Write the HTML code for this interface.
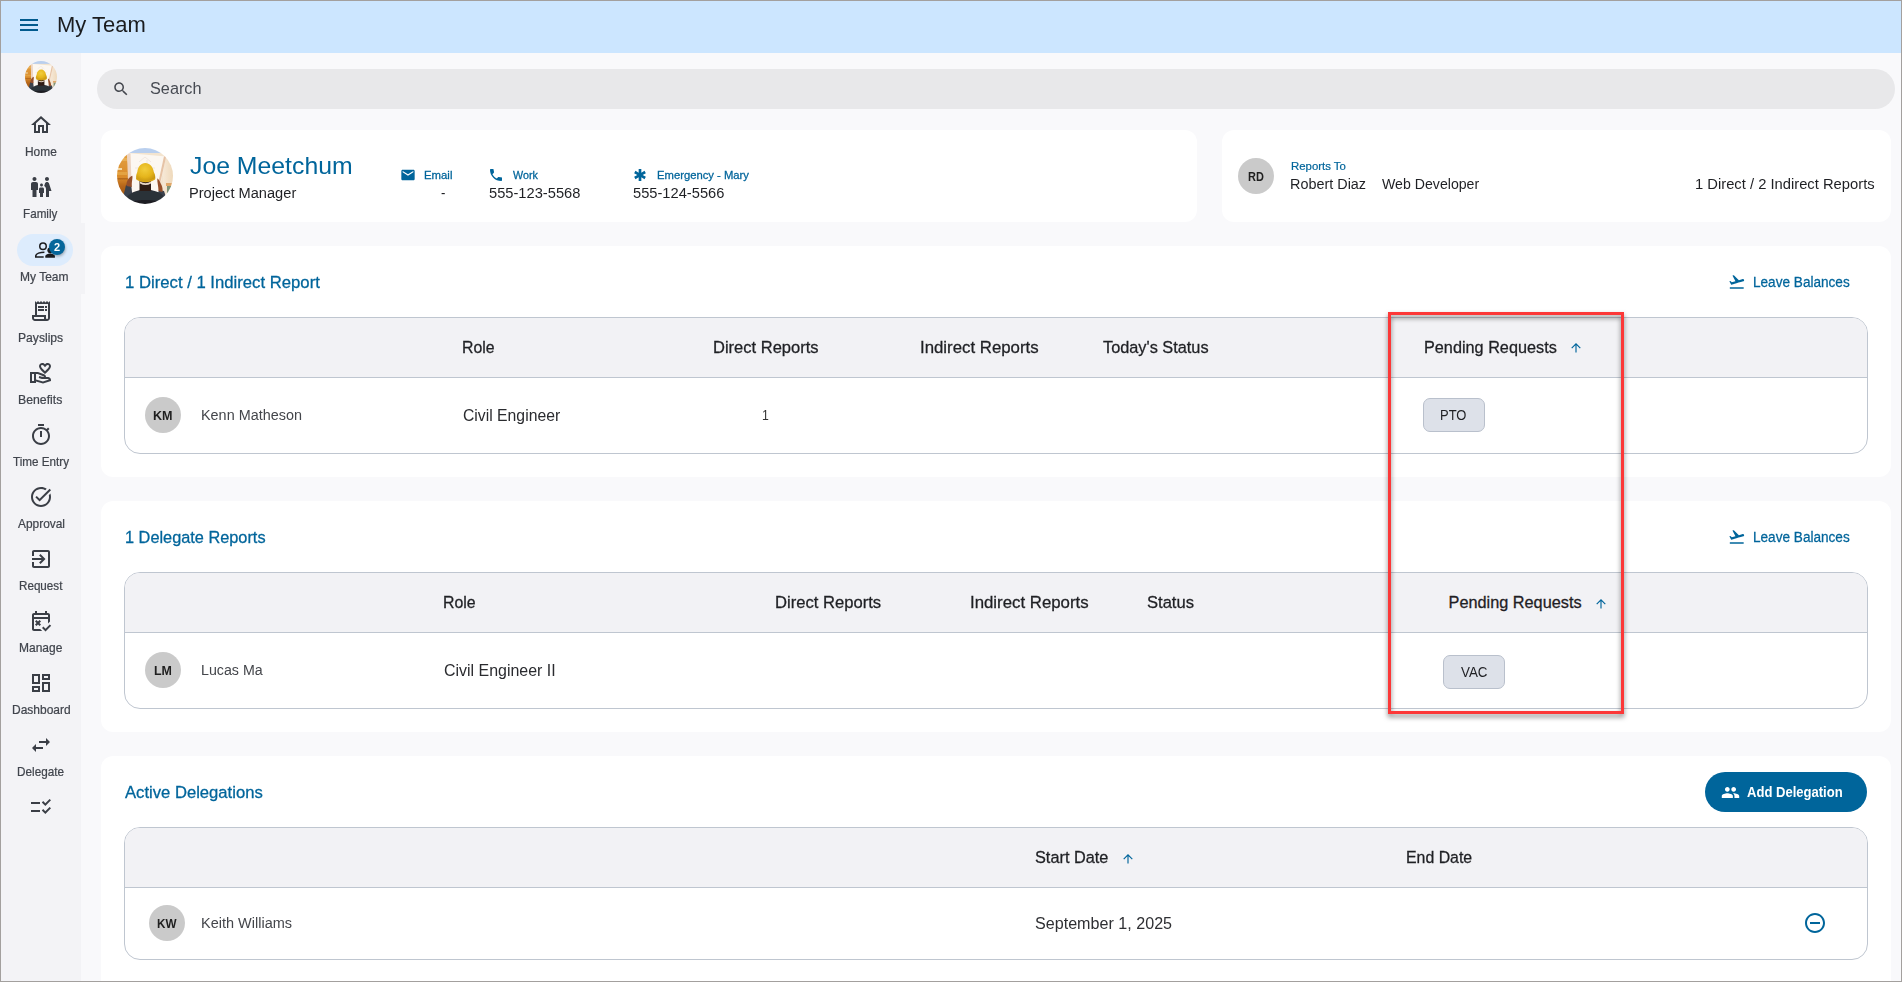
<!DOCTYPE html>
<html><head><meta charset="utf-8"><title>My Team</title>
<style>
html,body{margin:0;padding:0;}
body{width:1902px;height:982px;overflow:hidden;position:relative;background:#f9f9fb;font-family:"Liberation Sans",sans-serif;}
.b{position:absolute;}
.ic{position:absolute;display:block;overflow:visible;}
.t{position:absolute;white-space:nowrap;transform-origin:0 50%;display:block;}
#frame{position:absolute;left:0;top:0;width:1902px;height:982px;box-sizing:border-box;border:1px solid #a3a09e;z-index:50;pointer-events:none;}
</style></head><body>
<div class="b" style="left:1px;top:1px;width:1900px;height:52px;background:#cce6ff;"></div>
<div class="b" style="left:1px;top:53px;width:80px;height:928px;background:#f3f3f6;"></div>
<div class="b" style="left:81px;top:223px;width:4px;height:71px;background:#f3f3f6;"></div>
<div class="b" style="left:81px;top:53px;width:1820px;height:928px;background:#f9f9fb;z-index:-1;"></div>
<div class="b" style="left:20px;top:19px;width:18px;height:2px;background:#005a8e;"></div>
<div class="b" style="left:20px;top:24px;width:18px;height:2px;background:#005a8e;"></div>
<div class="b" style="left:20px;top:29px;width:18px;height:2px;background:#005a8e;"></div>
<div class="b" style="left:97px;top:69px;width:1798px;height:40px;background:#e8e8ea;border-radius:20px;"></div>
<svg class="ic" style="left:111.85px;top:79.75px;width:18px;height:18px;" viewBox="0 0 24 24"><path fill="#44474e" d="M15.500 14h-.79l-.28-.27C15.410 12.590 16 11.110 16 9.500 16 5.910 13.090 3 9.500 3S3 5.910 3 9.500 5.910 16 9.500 16c1.610 0 3.090-.59 4.230-1.570l.27.28v.79l5 4.990L20.490 19l-4.990-5zm-6 0C7.010 14 5 11.990 5 9.500S7.010 5 9.500 5 14 7.010 14 9.500 11.990 14 9.500 14z"/></svg>
<svg class="ic" style="left:25.0px;top:61.0px;width:32px;height:32px" viewBox="0 0 56 56"><defs>
<clipPath id="avc1"><circle cx="28" cy="28" r="28"/></clipPath>
<linearGradient id="avw1" x1="0" y1="0" x2="0" y2="1"><stop offset="0" stop-color="#e3a041"/><stop offset=".45" stop-color="#d98a2a"/><stop offset=".62" stop-color="#b5651a"/><stop offset="1" stop-color="#8a4a14"/></linearGradient>
<linearGradient id="avr1" x1="0" y1="0" x2="1" y2="0"><stop offset="0" stop-color="#f6e8d6"/><stop offset="1" stop-color="#ecd3b0"/></linearGradient>
<radialGradient id="avh1" cx=".45" cy=".35" r=".7"><stop offset="0" stop-color="#f2cd3c"/><stop offset=".6" stop-color="#e5b51c"/><stop offset="1" stop-color="#c4920e"/></radialGradient>
<filter id="avb1" x="-10%" y="-10%" width="120%" height="120%"><feGaussianBlur stdDeviation=".55"/></filter>
</defs>
<g clip-path="url(#avc1)"><g filter="url(#avb1)">
<rect x="-2" y="-2" width="60" height="60" fill="#f3e4cf"/>
<rect x="12" y="-2" width="34" height="7" fill="#b9cfee"/>
<rect x="-2" y="6" width="13" height="52" fill="url(#avw1)"/>
<rect x="1" y="20" width="4" height="2" fill="#f2d9a8"/><rect x="2" y="10" width="8" height="3" fill="#ecb860" opacity=".7"/><rect x="0" y="24" width="10" height="3" fill="#e9b050" opacity=".6"/><rect x="0" y="30" width="11" height="1.500" fill="#a85c14" opacity=".7"/>
<rect x="46" y="8" width="14" height="50" fill="url(#avr1)"/>
<rect x="49" y="35" width="7" height="3" fill="#e0a86a"/>
<rect x="50" y="38" width="4" height="9" fill="#7f9478"/>
<path d="M10 5 L49 8.500 L41 48 L14 48 Z" fill="#fcf7f1"/>
<path d="M10 5 L13.500 5.500 L15 48 L11.500 48 Z" fill="#ecd4c2"/>
<path d="M47 8.300 L49.200 8.600 L43 36 L41.200 35 Z" fill="#e6c3a6"/>
<path d="M22 14l6-5 6 5M18 20h20M30 12v14" stroke="#e6d6cc" stroke-width=".5" fill="none"/>
<path d="M9 37 L14 36 L15.500 48 L40 48 L42 42 L47 43 L52 58 L4 58 Z" fill="#3a424e"/>
<path d="M6 58 C8 46 17 43.500 23 42 L34 42 C41 43.500 49 46 51 58 Z" fill="#2c3038"/>
<path d="M8 58 C14 50 42 50 50 58 Z" fill="#1d1e22"/><path d="M22.500 32 h11.500 v11 h-11.500 Z" fill="#2e1c14"/>
<path d="M23 33.500 q5.500 3.500 11 0 v2 q-5.500 3.200 -11 0 Z" fill="#e8d6c8"/>
<path d="M19.200 30.800 C18.800 27 19.800 25.500 20.300 24 C21 18.500 24 15 28.300 15 C32.600 15 36 18.500 36.800 24 C37.500 25.500 38.600 27 38.200 30.800 C34 34 23 34 19.200 30.800 Z" fill="url(#avh1)"/>
<path d="M19 29.500 C22 33.500 35 33.500 38.300 29.500 L38 31.600 C34 35 23 35 19.300 31.600 Z" fill="#d9a516"/>
<path d="M9.500 38 C9 33 12 29 15.300 27.700 C16 30 14.500 33 14.800 39 Z" fill="#96502a"/>
<path d="M40.300 30.500 C42 31 43.500 35 44.500 37 C45.500 39 45.800 42 45.500 44 L41.500 43 C41.500 38 40 34 40.300 30.500 Z" fill="#96502a"/>
</g></g>
</svg>
<div class="b" style="left:17px;top:234px;width:56px;height:32px;background:#ddecfd;border-radius:16px;"></div>
<svg class="ic" style="left:29.00px;top:113.00px;width:24px;height:24px;" viewBox="0 0 24 24"><path fill="#3a3e46" d="M12 5.69l5 4.5V18h-2v-6H9v6H7v-7.81l5-4.5M12 3L2 12h3v8h6v-6h2v6h6v-8h3L12 3z"/></svg>
<svg class="ic" style="left:29.00px;top:175.00px;width:24px;height:24px;" viewBox="0 0 24 24"><path fill="#3a3e46" d="M16 4c0-1.11.89-2 2-2s2 .89 2 2-.89 2-2 2-2-.89-2-2zm4 18v-6h2.5l-2.54-7.63C19.68 7.55 18.92 7 18.06 7h-.12c-.86 0-1.63.55-1.9 1.37l-.86 2.58c1.08.6 1.82 1.73 1.82 3.05v8h3zm-7.5-10.500c.83 0 1.500-.67 1.500-1.500s-.67-1.500-1.500-1.500S11 9.170 11 10s.67 1.500 1.500 1.500zM5.500 6c1.110 0 2-.89 2-2s-.89-2-2-2-2 .89-2 2 .89 2 2 2zm2 16v-7H9V9c0-1.100-.9-2-2-2H4c-1.100 0-2 .9-2 2v6h1.500v7h4zm6.500 0v-4h1v-4c0-.82-.68-1.500-1.500-1.500h-2c-.82 0-1.500.68-1.500 1.500v4h1v4h3z"/></svg>
<svg class="ic" style="left:33px;top:238px;width:24px;height:24px" viewBox="0 0 24 24"><circle cx="10" cy="8.300" r="3.250" fill="none" stroke="#1b1c1f" stroke-width="1.500"/><path d="M11.400 14.200 C7.200 14.200 2.750 15.500 2.750 17.900 V18.950 H10.700" fill="none" stroke="#1b1c1f" stroke-width="1.500"/><circle cx="17.300" cy="12.300" r="2.900" fill="#1b1c1f"/><path d="M12.300 19.700 V18.300 C12.300 16.500 15 15.500 17.100 15.500 C19.200 15.500 21.900 16.500 21.900 18.300 V19.700 Z" fill="#1b1c1f"/></svg>
<svg class="ic" style="left:29.00px;top:299.00px;width:24px;height:24px;" viewBox="0 0 24 24"><path fill="#3a3e46" d="M19.500 3.500L18 2l-1.500 1.500L15 2l-1.500 1.500L12 2l-1.500 1.500L9 2 7.500 3.500 6 2v14H3v3c0 1.660 1.340 3 3 3h12c1.660 0 3-1.340 3-3V2l-1.500 1.500zM15 20H6c-.55 0-1-.45-1-1v-1h10v2zm4-1c0 .55-.45 1-1 1s-1-.45-1-1v-3H8V5h11v14zM9 7h6v2H9zM16 7h2v2h-2zM9 10h6v2H9zM16 10h2v2h-2z"/></svg>
<svg class="ic" style="left:29.00px;top:361.00px;width:24px;height:24px;" viewBox="0 0 24 24"><path fill="#3a3e46" d="M16 13c3.090-2.810 6-5.440 6-7.700C22 3.450 20.550 2 18.700 2c-1.040 0-2.050.49-2.700 1.250C15.340 2.490 14.340 2 13.300 2 11.450 2 10 3.450 10 5.300c0 2.260 2.910 4.890 6 7.700zm-2.700-9c.44 0 .89.21 1.180.55L16 6.340l1.520-1.790c.29-.34.74-.55 1.180-.55.74 0 1.300.56 1.300 1.300 0 1.120-2.040 3.170-4 4.990-1.960-1.820-4-3.880-4-4.990 0-.74.56-1.300 1.300-1.300zM19 16h-2c0-1.200-.75-2.280-1.870-2.700L8.970 11H1v11h6v-1.440l7 1.940 8-2.500v-1c0-1.660-1.340-3-3-3zM3 20v-7h2v7H3zm10.970.41L7 18.480V13h1.610l5.820 2.170c.34.13.57.46.57.83 0 0-1.990-.05-2.300-.15l-2.380-.79-.63 1.900 2.380.79c.51.17 1.040.25 1.580.25H19c.39 0 .74.23.9.56l-5.930 1.850z"/></svg>
<svg class="ic" style="left:29.00px;top:423.00px;width:24px;height:24px;" viewBox="0 0 24 24"><path fill="#3a3e46" d="M15 1H9v2h6V1zm-4 13h2V8h-2v6zm8.030-6.610l1.420-1.420c-.43-.51-.9-.99-1.410-1.410l-1.420 1.420C16.070 4.740 14.120 4 12 4c-4.970 0-9 4.030-9 9s4.020 9 9 9 9-4.030 9-9c0-2.120-.74-4.070-1.970-5.610zM12 20c-3.870 0-7-3.130-7-7s3.130-7 7-7 7 3.130 7 7-3.130 7-7 7z"/></svg>
<svg class="ic" style="left:29.00px;top:485.00px;width:24px;height:24px;" viewBox="0 0 24 24"><path fill="#3a3e46" d="M22 5.180L10.590 16.600l-4.240-4.240 1.410-1.410 2.830 2.830 10-10L22 5.180zm-2.210 5.040c.13.57.21 1.170.21 1.780 0 4.420-3.580 8-8 8s-8-3.580-8-8 3.580-8 8-8c1.580 0 3.040.46 4.280 1.250l1.440-1.440C16.100 2.670 14.130 2 12 2 6.480 2 2 6.480 2 12s4.480 10 10 10 10-4.480 10-10c0-1.190-.22-2.330-.6-3.390l-1.610 1.610z"/></svg>
<svg class="ic" style="left:29.00px;top:547.00px;width:24px;height:24px;" viewBox="0 0 24 24"><path fill="#3a3e46" d="M10.090 15.590L11.500 17l5-5-5-5-1.410 1.410L12.670 11H3v2h9.670l-2.580 2.590zM19 3H5c-1.110 0-2 .9-2 2v4h2V5h14v14H5v-4H3v4c0 1.100.89 2 2 2h14c1.100 0 2-.9 2-2V5c0-1.100-.9-2-2-2z"/></svg>
<svg class="ic" style="left:29.00px;top:609.00px;width:24px;height:24px;" viewBox="0 0 24 24"><path fill="#3a3e46" d="M11.210 20H5V10h14v4.380l2-2V6c0-1.100-.9-2-2-2h-1V2h-2v2H8V2H6v2H5c-1.110 0-1.990.9-1.990 2L3 20c0 1.100.89 2 2 2h8.210l-2-2zM5 6h14v2H5V6zm11.540 16.500L13 18.950l1.410-1.410 2.120 2.120 4.240-4.240 1.410 1.410-5.640 5.670zM10.410 14L12 15.590 10.590 17 9 15.410 7.410 17 6 15.590 7.590 14 6 12.410 7.410 11 9 12.590 10.590 11 12 12.410 10.410 14z"/></svg>
<svg class="ic" style="left:29.00px;top:671.00px;width:24px;height:24px;" viewBox="0 0 24 24"><path fill="#3a3e46" d="M19 5v2h-4V5h4M9 5v6H5V5h4m10 8v6h-4v-6h4M9 17v2H5v-2h4M21 3h-8v6h8V3zM11 3H3v10h8V3zm10 8h-8v10h8V11zm-10 4H3v6h8v-6z"/></svg>
<svg class="ic" style="left:29.00px;top:733.00px;width:24px;height:24px;" viewBox="0 0 24 24"><path fill="#3a3e46" d="M6.990 11L3 15l3.990 4v-3H14v-2H6.990v-3zM21 9l-3.990-4v3H10v2h7.010v3L21 9z"/></svg>
<svg class="ic" style="left:29.00px;top:795.00px;width:24px;height:24px;" viewBox="0 0 24 24"><path fill="#3a3e46" d="M11 7H2v2h9V7zm0 8H2v2h9v-2zm5.340-4L12.800 7.460l1.410-1.410 2.120 2.120 4.240-4.240L22 5.340 16.340 11zm0 8l-3.540-3.540 1.410-1.410 2.120 2.120 4.240-4.240L22 13.340 16.340 19z"/></svg>
<div class="b" style="left:48.55px;top:238.8px;width:16.4px;height:16.4px;border-radius:50%;background:#05669b;box-shadow:0.5px 1.5px 3px rgba(0,0,0,.3);"></div>
<div class="b" style="left:101px;top:130px;width:1096px;height:92px;background:#fff;border-radius:12px;"></div>
<div class="b" style="left:1222px;top:130px;width:669px;height:92px;background:#fff;border-radius:12px;"></div>
<div class="b" style="left:101px;top:246px;width:1790px;height:231px;background:#fff;border-radius:12px;"></div>
<div class="b" style="left:101px;top:501px;width:1790px;height:231px;background:#fff;border-radius:12px;"></div>
<div class="b" style="left:101px;top:756px;width:1790px;height:244px;background:#fff;border-radius:12px;"></div>
<svg class="ic" style="left:117.0px;top:148.0px;width:56px;height:56px" viewBox="0 0 56 56"><defs>
<clipPath id="avc2"><circle cx="28" cy="28" r="28"/></clipPath>
<linearGradient id="avw2" x1="0" y1="0" x2="0" y2="1"><stop offset="0" stop-color="#e3a041"/><stop offset=".45" stop-color="#d98a2a"/><stop offset=".62" stop-color="#b5651a"/><stop offset="1" stop-color="#8a4a14"/></linearGradient>
<linearGradient id="avr2" x1="0" y1="0" x2="1" y2="0"><stop offset="0" stop-color="#f6e8d6"/><stop offset="1" stop-color="#ecd3b0"/></linearGradient>
<radialGradient id="avh2" cx=".45" cy=".35" r=".7"><stop offset="0" stop-color="#f2cd3c"/><stop offset=".6" stop-color="#e5b51c"/><stop offset="1" stop-color="#c4920e"/></radialGradient>
<filter id="avb2" x="-10%" y="-10%" width="120%" height="120%"><feGaussianBlur stdDeviation=".55"/></filter>
</defs>
<g clip-path="url(#avc2)"><g filter="url(#avb2)">
<rect x="-2" y="-2" width="60" height="60" fill="#f3e4cf"/>
<rect x="12" y="-2" width="34" height="7" fill="#b9cfee"/>
<rect x="-2" y="6" width="13" height="52" fill="url(#avw2)"/>
<rect x="1" y="20" width="4" height="2" fill="#f2d9a8"/><rect x="2" y="10" width="8" height="3" fill="#ecb860" opacity=".7"/><rect x="0" y="24" width="10" height="3" fill="#e9b050" opacity=".6"/><rect x="0" y="30" width="11" height="1.500" fill="#a85c14" opacity=".7"/>
<rect x="46" y="8" width="14" height="50" fill="url(#avr2)"/>
<rect x="49" y="35" width="7" height="3" fill="#e0a86a"/>
<rect x="50" y="38" width="4" height="9" fill="#7f9478"/>
<path d="M10 5 L49 8.500 L41 48 L14 48 Z" fill="#fcf7f1"/>
<path d="M10 5 L13.500 5.500 L15 48 L11.500 48 Z" fill="#ecd4c2"/>
<path d="M47 8.300 L49.200 8.600 L43 36 L41.200 35 Z" fill="#e6c3a6"/>
<path d="M22 14l6-5 6 5M18 20h20M30 12v14" stroke="#e6d6cc" stroke-width=".5" fill="none"/>
<path d="M9 37 L14 36 L15.500 48 L40 48 L42 42 L47 43 L52 58 L4 58 Z" fill="#3a424e"/>
<path d="M6 58 C8 46 17 43.500 23 42 L34 42 C41 43.500 49 46 51 58 Z" fill="#2c3038"/>
<path d="M8 58 C14 50 42 50 50 58 Z" fill="#1d1e22"/><path d="M22.500 32 h11.500 v11 h-11.500 Z" fill="#2e1c14"/>
<path d="M23 33.500 q5.500 3.500 11 0 v2 q-5.500 3.200 -11 0 Z" fill="#e8d6c8"/>
<path d="M19.200 30.800 C18.800 27 19.800 25.500 20.300 24 C21 18.500 24 15 28.300 15 C32.600 15 36 18.500 36.800 24 C37.500 25.500 38.600 27 38.200 30.800 C34 34 23 34 19.200 30.800 Z" fill="url(#avh2)"/>
<path d="M19 29.500 C22 33.500 35 33.500 38.300 29.500 L38 31.600 C34 35 23 35 19.300 31.600 Z" fill="#d9a516"/>
<path d="M9.500 38 C9 33 12 29 15.300 27.700 C16 30 14.500 33 14.800 39 Z" fill="#96502a"/>
<path d="M40.300 30.500 C42 31 43.500 35 44.500 37 C45.500 39 45.800 42 45.500 44 L41.500 43 C41.500 38 40 34 40.300 30.500 Z" fill="#96502a"/>
</g></g>
</svg>
<svg class="ic" style="left:399.60px;top:166.80px;width:16px;height:16px;" viewBox="0 0 24 24"><path fill="#00659b" d="M20 4H4c-1.100 0-1.990.9-1.990 2L2 18c0 1.100.9 2 2 2h16c1.100 0 2-.9 2-2V6c0-1.100-.9-2-2-2zm0 4l-8 5-8-5V6l8 5 8-5v2z"/></svg>
<svg class="ic" style="left:488.40px;top:166.90px;width:16px;height:16px;" viewBox="0 0 24 24"><path fill="#00659b" d="M6.620 10.790c1.440 2.830 3.760 5.140 6.590 6.590l2.200-2.200c.27-.27.67-.36 1.020-.24 1.120.37 2.330.57 3.570.57.55 0 1 .45 1 1V20c0 .55-.45 1-1 1-9.390 0-17-7.610-17-17 0-.55.45-1 1-1h3.500c.55 0 1 .45 1 1 0 1.250.2 2.450.57 3.570.11.35.03.74-.25 1.020l-2.200 2.200z"/></svg>
<svg class="ic" style="left:632.30px;top:166.90px;width:16px;height:16px;" viewBox="0 0 24 24"><path fill="#00659b" d="M20.790 9.230l-2-3.460L14 8.540V3h-4v5.540L5.210 5.770l-2 3.460L8 12l-4.790 2.770 2 3.460L10 15.460V21h4v-5.540l4.790 2.770 2-3.460L16 12z"/></svg>
<div class="b" style="left:1237.9px;top:157.9px;width:36px;height:36px;border-radius:50%;background:#cacaca;"></div>
<div class="b" style="left:124px;top:317px;width:1744px;height:137px;border:1px solid #bfc6d0;border-radius:16px;box-sizing:border-box;overflow:hidden;background:#fff;"><div style="height:59px;background:#f2f2f5;border-bottom:1px solid #bfc6d0;"></div></div>
<div class="b" style="left:124px;top:572px;width:1744px;height:137px;border:1px solid #bfc6d0;border-radius:16px;box-sizing:border-box;overflow:hidden;background:#fff;"><div style="height:59px;background:#f2f2f5;border-bottom:1px solid #bfc6d0;"></div></div>
<div class="b" style="left:124px;top:827px;width:1744px;height:133px;border:1px solid #bfc6d0;border-radius:16px;box-sizing:border-box;overflow:hidden;background:#fff;"><div style="height:59px;background:#f2f2f5;border-bottom:1px solid #bfc6d0;"></div></div>
<div class="b" style="left:145.0px;top:396.8px;width:36px;height:36px;border-radius:50%;background:#cacaca;"></div>
<div class="b" style="left:145.0px;top:651.8px;width:36px;height:36px;border-radius:50%;background:#cacaca;"></div>
<div class="b" style="left:149.0px;top:905.0px;width:36px;height:36px;border-radius:50%;background:#cacaca;"></div>
<svg class="ic" style="left:1728.05px;top:273.35px;width:17.5px;height:17.5px;transform:scaleY(1.07);" viewBox="0 0 24 24"><path fill="#00659b" d="M2.500 19h19v2h-19v-2zm19.570-9.360c-.21-.8-1.040-1.280-1.840-1.060L14.920 10l-6.900-6.430-1.930.51 4.140 7.170-4.970 1.330-1.970-1.540-1.450.39 2.590 4.490s7.120-1.900 16.570-4.430c.81-.23 1.280-1.050 1.070-1.850z"/></svg>
<svg class="ic" style="left:1728.05px;top:528.35px;width:17.5px;height:17.5px;transform:scaleY(1.07);" viewBox="0 0 24 24"><path fill="#00659b" d="M2.500 19h19v2h-19v-2zm19.570-9.360c-.21-.8-1.040-1.280-1.840-1.060L14.920 10l-6.900-6.430-1.930.51 4.140 7.170-4.970 1.330-1.970-1.540-1.450.39 2.590 4.490s7.120-1.900 16.570-4.430c.81-.23 1.280-1.050 1.070-1.850z"/></svg>
<svg class="ic" style="left:1569.3px;top:341.4px;width:14px;height:14px" viewBox="0 0 14 14"><path d="M7 3V11.400M2.700 7.200L7 2.900L11.300 7.200" fill="none" stroke="#00659b" stroke-width="1.150" stroke-linecap="butt" stroke-linejoin="miter"/></svg>
<svg class="ic" style="left:1594.2px;top:596.6px;width:14px;height:14px" viewBox="0 0 14 14"><path d="M7 3V11.400M2.700 7.200L7 2.900L11.300 7.200" fill="none" stroke="#00659b" stroke-width="1.150" stroke-linecap="butt" stroke-linejoin="miter"/></svg>
<svg class="ic" style="left:1121.2px;top:851.6px;width:14px;height:14px" viewBox="0 0 14 14"><path d="M7 3V11.400M2.700 7.200L7 2.900L11.300 7.200" fill="none" stroke="#00659b" stroke-width="1.150" stroke-linecap="butt" stroke-linejoin="miter"/></svg>
<div class="b" style="left:1423px;top:398px;width:61.59999999999991px;height:34px;background:#dde1e9;border:1px solid #b9c0cc;border-radius:7px;box-sizing:border-box;"></div>
<div class="b" style="left:1443px;top:655px;width:61.59999999999991px;height:34px;background:#dde1e9;border:1px solid #b9c0cc;border-radius:7px;box-sizing:border-box;"></div>
<div class="b" style="left:1705px;top:772px;width:162px;height:40px;background:#00659b;border-radius:20px;"></div>
<svg class="ic" style="left:1720.95px;top:782.55px;width:19px;height:19px;" viewBox="0 0 24 24"><path fill="#fff" d="M16 11c1.660 0 2.990-1.340 2.990-3S17.660 5 16 5c-1.660 0-3 1.340-3 3s1.340 3 3 3zm-8 0c1.660 0 2.990-1.340 2.990-3S9.660 5 8 5C6.340 5 5 6.340 5 8s1.340 3 3 3zm0 2c-2.330 0-7 1.170-7 3.500V19h14v-2.500c0-2.330-4.670-3.500-7-3.500zm8 0c-.29 0-.62.02-.97.05 1.160.84 1.970 1.970 1.970 3.450V19h6v-2.500c0-2.330-4.670-3.500-7-3.500z"/></svg>
<svg class="ic" style="left:1803.00px;top:911.00px;width:24px;height:24px;" viewBox="0 0 24 24"><path fill="#00659b" d="M7 11v2h10v-2H7zm5-9C6.480 2 2 6.480 2 12s4.480 10 10 10 10-4.480 10-10S17.520 2 12 2zm0 18c-4.410 0-8-3.590-8-8s3.590-8 8-8 8 3.590 8 8-3.590 8-8 8z"/></svg>
<div class="b" style="left:1388px;top:312px;width:236px;height:402px;border:3px solid #fc3838;box-sizing:border-box;filter:drop-shadow(0px 3px 2.5px rgba(0,0,0,.5));"></div>
<span id="t_title" class="t" style="left:57.12px;top:10px;font-size:22.5px;line-height:29px;color:#1a1c1f;transform:scaleX(0.9774);">My Team</span>
<span id="t_search" class="t" style="left:149.80px;top:78px;font-size:16.3px;line-height:21px;color:#464a52;transform:scaleX(0.9994);">Search</span>
<span id="s0" class="t" style="left:24.83px;top:144px;font-size:12.2px;line-height:16px;color:#41454d;-webkit-text-stroke:0.22px #41454d;transform:scaleX(0.9765);">Home</span>
<span id="s1" class="t" style="left:22.95px;top:206px;font-size:12.2px;line-height:16px;color:#41454d;-webkit-text-stroke:0.22px #41454d;transform:scaleX(0.9581);">Family</span>
<span id="s2" class="t" style="left:20.22px;top:269px;font-size:12.2px;line-height:16px;color:#41454d;-webkit-text-stroke:0.22px #41454d;transform:scaleX(0.9856);">My Team</span>
<span id="s3" class="t" style="left:18.01px;top:330px;font-size:12.2px;line-height:16px;color:#41454d;-webkit-text-stroke:0.22px #41454d;transform:scaleX(0.9953);">Payslips</span>
<span id="s4" class="t" style="left:18.40px;top:392px;font-size:12.2px;line-height:16px;color:#41454d;-webkit-text-stroke:0.22px #41454d;transform:scaleX(1.0066);">Benefits</span>
<span id="s5" class="t" style="left:12.61px;top:454px;font-size:12.2px;line-height:16px;color:#41454d;-webkit-text-stroke:0.22px #41454d;transform:scaleX(0.9583);">Time Entry</span>
<span id="s6" class="t" style="left:17.71px;top:516px;font-size:12.2px;line-height:16px;color:#41454d;-webkit-text-stroke:0.22px #41454d;transform:scaleX(0.9766);">Approval</span>
<span id="s7" class="t" style="left:18.65px;top:578px;font-size:12.2px;line-height:16px;color:#41454d;-webkit-text-stroke:0.22px #41454d;transform:scaleX(0.9552);">Request</span>
<span id="s8" class="t" style="left:18.82px;top:640px;font-size:12.2px;line-height:16px;color:#41454d;-webkit-text-stroke:0.22px #41454d;transform:scaleX(0.9843);">Manage</span>
<span id="s9" class="t" style="left:11.52px;top:702px;font-size:12.2px;line-height:16px;color:#41454d;-webkit-text-stroke:0.22px #41454d;transform:scaleX(0.9834);">Dashboard</span>
<span id="s10" class="t" style="left:16.74px;top:764px;font-size:12.2px;line-height:16px;color:#41454d;-webkit-text-stroke:0.22px #41454d;transform:scaleX(0.9642);">Delegate</span>
<span id="p_name" class="t" style="left:189.70px;top:150px;font-size:24.5px;line-height:32px;color:#00659b;transform:scaleX(1.0121);">Joe Meetchum</span>
<span id="p_role" class="t" style="left:188.74px;top:183px;font-size:15.3px;line-height:20px;color:#1f2024;transform:scaleX(0.9556);">Project Manager</span>
<span id="c_email" class="t" style="left:424.34px;top:168px;font-size:11.2px;line-height:15px;color:#00659b;-webkit-text-stroke:0.28px #00659b;transform:scaleX(1.0155);">Email</span>
<span id="c_dash" class="t" style="left:441.30px;top:183px;font-size:15.3px;line-height:20px;color:#1f2024;transform:scaleX(0.8600);">-</span>
<span id="c_work" class="t" style="left:513.13px;top:168px;font-size:11.2px;line-height:15px;color:#00659b;-webkit-text-stroke:0.28px #00659b;transform:scaleX(0.9592);">Work</span>
<span id="c_wnum" class="t" style="left:489.00px;top:183px;font-size:15.3px;line-height:20px;color:#1f2024;transform:scaleX(0.9593);">555-123-5568</span>
<span id="c_emer" class="t" style="left:656.54px;top:168px;font-size:11.2px;line-height:15px;color:#00659b;-webkit-text-stroke:0.28px #00659b;transform:scaleX(1.0057);">Emergency - Mary</span>
<span id="c_enum" class="t" style="left:632.90px;top:183px;font-size:15.3px;line-height:20px;color:#1f2024;transform:scaleX(0.9593);">555-124-5566</span>
<span id="r_rd" class="t" style="left:1247.90px;top:168px;font-size:13.4px;line-height:17px;color:#1f1f1f;font-weight:700;transform:scaleX(0.8185);">RD</span>
<span id="r_lbl" class="t" style="left:1290.61px;top:159px;font-size:11.5px;line-height:15px;color:#00659b;-webkit-text-stroke:0.22px #00659b;transform:scaleX(0.9904);">Reports To</span>
<span id="r_name" class="t" style="left:1289.56px;top:174px;font-size:15.3px;line-height:20px;color:#1f2024;transform:scaleX(0.9417);">Robert Diaz</span>
<span id="r_role" class="t" style="left:1381.60px;top:174px;font-size:15.3px;line-height:20px;color:#1f2024;transform:scaleX(0.9243);">Web Developer</span>
<span id="r_cnt" class="t" style="left:1694.84px;top:174px;font-size:15.3px;line-height:20px;color:#1f2024;transform:scaleX(0.9648);">1 Direct / 2 Indirect Reports</span>
<span id="s1_title" class="t" style="left:124.92px;top:272px;font-size:16.3px;line-height:21px;color:#00659b;-webkit-text-stroke:0.28px #00659b;transform:scaleX(1.0254);">1 Direct / 1 Indirect Report</span>
<span id="s1_lb" class="t" style="left:1753.14px;top:272px;font-size:15.3px;line-height:20px;color:#00659b;-webkit-text-stroke:0.28px #00659b;transform:scaleX(0.8886);">Leave Balances</span>
<span id="s1_h1" class="t" style="left:461.56px;top:337px;font-size:16.3px;line-height:21px;color:#1f2024;-webkit-text-stroke:0.28px #1f2024;transform:scaleX(0.9722);">Role</span>
<span id="s1_h2" class="t" style="left:712.83px;top:337px;font-size:16.3px;line-height:21px;color:#1f2024;-webkit-text-stroke:0.28px #1f2024;transform:scaleX(1.0147);">Direct Reports</span>
<span id="s1_h3" class="t" style="left:920.11px;top:337px;font-size:16.3px;line-height:21px;color:#1f2024;-webkit-text-stroke:0.28px #1f2024;transform:scaleX(1.0319);">Indirect Reports</span>
<span id="s1_h4" class="t" style="left:1103.44px;top:337px;font-size:16.3px;line-height:21px;color:#1f2024;-webkit-text-stroke:0.28px #1f2024;transform:scaleX(1.0018);">Today&#x27;s Status</span>
<span id="s1_h5" class="t" style="left:1423.54px;top:337px;font-size:16.3px;line-height:21px;color:#1f2024;-webkit-text-stroke:0.28px #1f2024;transform:scaleX(0.9978);">Pending Requests</span>
<span id="s1_av" class="t" style="left:153.20px;top:407px;font-size:13.4px;line-height:17px;color:#1f1f1f;font-weight:700;transform:scaleX(0.9385);">KM</span>
<span id="s1_n" class="t" style="left:200.86px;top:405px;font-size:15.3px;line-height:20px;color:#44464b;transform:scaleX(0.9418);">Kenn Matheson</span>
<span id="s1_r" class="t" style="left:462.60px;top:405px;font-size:16.3px;line-height:21px;color:#2a2b2f;transform:scaleX(0.9671);">Civil Engineer</span>
<span id="s1_d" class="t" style="left:762.00px;top:405px;font-size:15.3px;line-height:20px;color:#333;transform:scaleX(0.8000);">1</span>
<span id="s1_chip" class="t" style="left:1440.35px;top:405px;font-size:15.3px;line-height:20px;color:#1f2024;transform:scaleX(0.8490);">PTO</span>
<span id="s2_title" class="t" style="left:124.94px;top:527px;font-size:16.3px;line-height:21px;color:#00659b;-webkit-text-stroke:0.28px #00659b;transform:scaleX(1.0020);">1 Delegate Reports</span>
<span id="s2_lb" class="t" style="left:1753.14px;top:527px;font-size:15.3px;line-height:20px;color:#00659b;-webkit-text-stroke:0.28px #00659b;transform:scaleX(0.8886);">Leave Balances</span>
<span id="s2_h1" class="t" style="left:442.56px;top:592px;font-size:16.3px;line-height:21px;color:#1f2024;-webkit-text-stroke:0.28px #1f2024;transform:scaleX(0.9752);">Role</span>
<span id="s2_h2" class="t" style="left:775.42px;top:592px;font-size:16.3px;line-height:21px;color:#1f2024;-webkit-text-stroke:0.28px #1f2024;transform:scaleX(1.0205);">Direct Reports</span>
<span id="s2_h3" class="t" style="left:970.31px;top:592px;font-size:16.3px;line-height:21px;color:#1f2024;-webkit-text-stroke:0.28px #1f2024;transform:scaleX(1.0319);">Indirect Reports</span>
<span id="s2_h4" class="t" style="left:1147.04px;top:592px;font-size:16.3px;line-height:21px;color:#1f2024;-webkit-text-stroke:0.28px #1f2024;transform:scaleX(1.0174);">Status</span>
<span id="s2_h5" class="t" style="left:1448.54px;top:592px;font-size:16.3px;line-height:21px;color:#1f2024;-webkit-text-stroke:0.28px #1f2024;transform:scaleX(1.0000);">Pending Requests</span>
<span id="s2_av" class="t" style="left:154.20px;top:662px;font-size:13.4px;line-height:17px;color:#1f1f1f;font-weight:700;transform:scaleX(0.9281);">LM</span>
<span id="s2_n" class="t" style="left:200.87px;top:660px;font-size:15.3px;line-height:20px;color:#44464b;transform:scaleX(0.9299);">Lucas Ma</span>
<span id="s2_r" class="t" style="left:443.60px;top:660px;font-size:16.3px;line-height:21px;color:#2a2b2f;transform:scaleX(0.9798);">Civil Engineer II</span>
<span id="s2_chip" class="t" style="left:1460.80px;top:662px;font-size:15.3px;line-height:20px;color:#1f2024;transform:scaleX(0.8754);">VAC</span>
<span id="s3_title" class="t" style="left:125.44px;top:782px;font-size:16.3px;line-height:21px;color:#00659b;-webkit-text-stroke:0.28px #00659b;transform:scaleX(1.0216);">Active Delegations</span>
<span id="s3_btn" class="t" style="left:1747.40px;top:782px;font-size:15.3px;line-height:20px;color:#ffffff;font-weight:700;transform:scaleX(0.8530);">Add Delegation</span>
<span id="s3_h1" class="t" style="left:1034.84px;top:847px;font-size:16.3px;line-height:21px;color:#1f2024;-webkit-text-stroke:0.28px #1f2024;transform:scaleX(1.0011);">Start Date</span>
<span id="s3_h2" class="t" style="left:1406.16px;top:847px;font-size:16.3px;line-height:21px;color:#1f2024;-webkit-text-stroke:0.28px #1f2024;transform:scaleX(0.9745);">End Date</span>
<span id="s3_av" class="t" style="left:157.00px;top:915px;font-size:13.4px;line-height:17px;color:#1f1f1f;font-weight:700;transform:scaleX(0.8734);">KW</span>
<span id="s3_n" class="t" style="left:200.85px;top:913px;font-size:15.3px;line-height:20px;color:#44464b;transform:scaleX(0.9476);">Keith Williams</span>
<span id="s3_d" class="t" style="left:1034.70px;top:913px;font-size:16.3px;line-height:21px;color:#2f3034;transform:scaleX(0.9897);">September 1, 2025</span>
<span id="badge" class="t" style="left:53.90px;top:240px;font-size:11.2px;line-height:15px;color:#fff;font-weight:700;transform:scaleX(0.9833);">2</span>
<div id="frame"></div>
</body></html>
